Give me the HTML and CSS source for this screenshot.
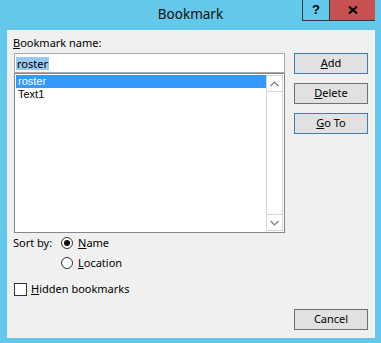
FILE: index.html
```html
<!DOCTYPE html>
<html>
<head>
<meta charset="utf-8">
<link rel="stylesheet" href="styles.css">
</head>
<body>
<div class="window">
  <div class="titlebar">
    <div class="spacer"></div>
    <div class="title">Bookmark</div>
    <div class="caption">
      <div class="cap-btn help">?</div>
      <div class="cap-btn close">
        <svg width="10" height="8" viewBox="0 0 10 8"><path d="M1 0.5 L9 7.5 M9 0.5 L1 7.5" stroke="#000" stroke-width="2.2" fill="none"/></svg>
      </div>
    </div>
  </div>
  <div class="client">
    <div class="left">
      <div class="label"><u>B</u>ookmark name:</div>
      <div class="input"><span class="hl">roster</span></div>
      <div class="list">
        <div class="items">
          <div class="item selected">roster</div>
          <div class="item">Text1</div>
        </div>
        <div class="scrollbar">
          <div class="sb-btn up"><svg width="9" height="6" viewBox="0 0 9 6"><path d="M0.5 5 L4.5 1 L8.5 5" stroke="#7a7a7a" stroke-width="1.2" fill="none"/></svg></div>
          <div class="sb-track"></div>
          <div class="sb-btn down"><svg width="9" height="6" viewBox="0 0 9 6"><path d="M0.5 1 L4.5 5 L8.5 1" stroke="#7a7a7a" stroke-width="1.2" fill="none"/></svg></div>
        </div>
      </div>
      <div class="sort">
        <div class="sort-label">Sort by:</div>
        <div class="radios">
          <label class="radio-row"><span class="radio checked"></span><span><u>N</u>ame</span></label>
          <label class="radio-row"><span class="radio"></span><span><u>L</u>ocation</span></label>
        </div>
      </div>
      <label class="check-row"><span class="checkbox"></span><span><u>H</u>idden bookmarks</span></label>
    </div>
    <div class="buttons">
      <div class="btn default"><u>A</u>dd</div>
      <div class="btn"><u>D</u>elete</div>
      <div class="btn default"><u>G</u>o To</div>
      <div class="btn cancel">Cancel</div>
    </div>
  </div>
</div>
</body>
</html>
```

FILE: styles.css
```css
* { box-sizing: border-box; }
html, body { margin: 0; padding: 0; }
body {
  width: 381px;
  height: 343px;
  background: #63c8e9;
  font-family: "Noto Sans", "Open Sans", sans-serif;
  font-size: 11px;
  color: #000;
  overflow: hidden;
}
.window {
  width: 381px;
  height: 343px;
  display: flex;
  flex-direction: column;
}
.titlebar {
  height: 30px;
  display: grid;
  grid-template-columns: 79px 1fr 79px;
}
.title {
  text-align: center;
  font-size: 13.5px;
  line-height: 29px;
  color: #111;
}
.caption {
  display: flex;
  height: 21px;
  align-self: start;
  justify-self: start;
}
.cap-btn {
  height: 21px;
  display: flex;
  align-items: center;
  justify-content: center;
  border-bottom: 1px solid #2d3a40;
}
.help {
  width: 28px;
  border-left: 1px solid #2d3a40;
  border-right: 1px solid #2d3a40;
  font-family: "Liberation Sans", sans-serif;
  font-weight: bold;
  font-size: 13px;
  padding-bottom: 1px;
}
.close {
  width: 45px;
  background: #c75050;
}
.client {
  margin: 0 6px 5px 7px;
  height: 308px;
  background: #f0f0f0;
  display: grid;
  grid-template-columns: 271px 74px;
  column-gap: 9px;
  padding: 0 7px 8px 7px;
}
.left {
  display: flex;
  flex-direction: column;
}
.label {
  margin-top: 5px;
  margin-left: -1px;
  line-height: 15px;
  height: 15px;
}
.input {
  margin-top: 3px;
  height: 20px;
  border: 1px solid #a9a9a9;
  background: #fff;
  padding: 3px 0 0 1px;
  line-height: 13px;
}
.hl {
  background: #99c9ef;
  display: inline-block;
  padding: 0 1px;
  height: 13px;
}
.list {
  height: 160px;
  border: 1px solid #828790;
  background: #fff;
  padding: 1px;
  display: flex;
}
.items {
  flex: 1;
}
.item {
  height: 13px;
  line-height: 13px;
  padding-left: 2px;
  font-family: "Liberation Sans", Arial, sans-serif;
  font-size: 11px;
}
.item.selected {
  background: #3399ff;
  color: #fff;
}
.scrollbar {
  width: 17px;
  border: 1px solid #d6d6d6;
  display: flex;
  flex-direction: column;
}
.sb-btn {
  height: 16px;
  display: flex;
  align-items: center;
  justify-content: center;
}
.sb-btn.up { border-bottom: 1px solid #d6d6d6; }
.sb-btn.down { border-top: 1px solid #d6d6d6; }
.sb-track { flex: 1; }
.sort {
  margin-top: 2px;
  margin-left: -1px;
  display: grid;
  grid-template-columns: 48px auto;
}
.sort-label {
  line-height: 16px;
}
.radios {
  display: flex;
  flex-direction: column;
  gap: 4px;
}
.radio-row, .check-row {
  display: flex;
  align-items: center;
  line-height: 16px;
  height: 16px;
}
.radio {
  width: 12px;
  height: 12px;
  border: 1px solid #333;
  border-radius: 50%;
  background: #fff;
  margin-right: 5px;
  display: flex;
  align-items: center;
  justify-content: center;
}
.radio.checked::after {
  content: "";
  width: 6px;
  height: 6px;
  border-radius: 50%;
  background: #111;
}
.check-row {
  margin-top: 10px;
}
.checkbox {
  width: 13px;
  height: 13px;
  border: 1px solid #333;
  background: #fff;
  margin-right: 4px;
}
.buttons {
  display: flex;
  flex-direction: column;
  gap: 9px;
  padding-top: 23px;
}
.btn {
  height: 21px;
  border: 1px solid #707070;
  background: #e1e1e1;
  text-align: center;
  line-height: 18px;
}
.btn.default {
  border-color: #3c7fb1;
}
.btn.cancel {
  margin-top: auto;
}
u { text-underline-offset: 1px; }
```
